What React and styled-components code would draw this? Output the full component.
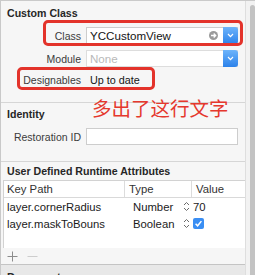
import React from 'react';
import styled, { createGlobalStyle } from 'styled-components';

const GlobalStyle = createGlobalStyle`
  html, body {
    margin: 0;
    padding: 0;
    background: #f6f6f6;
  }
  body {
    width: 255px;
    height: 275px;
    overflow: hidden;
    font-family: "Liberation Sans", Arial, sans-serif;
  }
`;

const Window = styled.div`
  position: relative;
  display: flex;
  width: 255px;
  height: 275px;
  box-sizing: border-box;
  border-top: 1px solid #cacaca;
  background: #f6f6f6;
  overflow: hidden;
`;

const Panel = styled.div`
  display: flex;
  flex-direction: column;
  width: 245px;
  box-sizing: border-box;
  border-left: 1px solid #c9c9c9;
`;

const Section = styled.div`
  padding-top: ${(p) => p.$top}px;
  padding-bottom: ${(p) => p.$bottom || 0}px;
  border-bottom: ${(p) => (p.$last ? 'none' : '1px solid #d6d6d6')};
`;

const SectionTitle = styled.div`
  padding-left: 6px;
  font-size: 10.6px;
  font-weight: bold;
  line-height: 14px;
  color: #262626;
`;

const FieldRow = styled.div`
  position: relative;
  display: grid;
  grid-template-columns: 80px 152px;
  column-gap: 5px;
  align-items: center;
  height: 17px;
  margin-top: ${(p) => p.$top}px;
`;

const Label = styled.span`
  text-align: right;
  font-size: 10.5px;
  color: #3b3b3b;
  white-space: nowrap;
`;

const Value = styled.span`
  padding-left: 4px;
  font-size: 10.8px;
  color: #151515;
`;

const Field = styled.div`
  display: flex;
  align-items: center;
  height: 17px;
  box-sizing: border-box;
  padding-left: 3px;
  border: 1px solid ${(p) => (p.$muted ? '#dddddd' : '#cdcdcd')};
  background: #ffffff;
  font-size: 11.6px;
  color: ${(p) => (p.$muted ? '#b9b9b9' : '#141414')};
`;

const FieldText = styled.span`
  flex: 1;
  white-space: nowrap;
`;

const GoIcon = styled.svg`
  margin-right: 5px;
`;

const PopupButton = styled.div`
  display: flex;
  align-items: center;
  justify-content: center;
  width: 15px;
  height: 17px;
  margin: -1px -1px -1px 0;
  border-radius: 0 3px 3px 0;
  background: linear-gradient(#6db4fb, #2c82ea);
`;

const Highlight = styled.div`
  position: absolute;
  left: ${(p) => p.$left}px;
  top: ${(p) => p.$top}px;
  width: ${(p) => p.$width}px;
  height: ${(p) => p.$height}px;
  box-sizing: border-box;
  border: 3px solid #e3332b;
  border-radius: 5px;
  pointer-events: none;
`;

const Annotation = styled.div`
  position: absolute;
  left: 92px;
  top: 97px;
  font-family: "Noto Sans CJK SC", sans-serif;
  font-size: 19.5px;
  line-height: 1;
  color: #e5382d;
  white-space: nowrap;
`;

const Table = styled.div`
  margin: 2px 0 0 2px;
  border-top: 1px solid #d2d2d2;
  border-left: 1px solid #d2d2d2;
  background: #ffffff;
`;

const Columns = styled.div`
  display: grid;
  grid-template-columns: 120px 67px 1fr;
  align-items: center;
`;

const HeaderRow = styled(Columns)`
  height: 16px;
  border-bottom: 1px solid #d9d9d9;
`;

const HeaderCell = styled.div`
  height: 100%;
  box-sizing: border-box;
  padding-left: ${(p) => p.$pad}px;
  border-left: ${(p) => (p.$divided ? '1px solid #dcdcdc' : 'none')};
  font-size: 11.3px;
  line-height: 16px;
  color: #333333;
`;

const BodyRow = styled(Columns)`
  height: 17px;
  font-size: 11.3px;
  color: #1b1b1b;
`;

const Cell = styled.div`
  display: flex;
  align-items: center;
  justify-content: ${(p) => (p.$spread ? 'space-between' : 'flex-start')};
  padding-left: ${(p) => p.$pad}px;
  padding-right: ${(p) => (p.$spread ? 1 : 0)}px;
  white-space: nowrap;
`;

const TableFill = styled.div`
  height: 16px;
`;

const Toolbar = styled.div`
  display: flex;
  align-items: center;
  gap: 9px;
  height: 16px;
  padding-left: 6px;
`;

const DocumentHeader = styled.div`
  flex: 1;
  padding: 5px 0 0 6px;
  border-top: 1px solid #c4c4c4;
  background: #e8e8e8;
  font-size: 11px;
  font-weight: bold;
  line-height: 14px;
  color: #262626;
`;

const ScrollTrack = styled.div`
  display: flex;
  justify-content: flex-end;
  width: 10px;
  box-sizing: border-box;
  padding-top: 4px;
  border-left: 1px solid #dedede;
  background: #f2f2f2;
`;

const ScrollThumb = styled.div`
  width: 5px;
  border-radius: 3px 3px 0 0;
  background: #c3c3c3;
`;

const Chevron = () => (
  <svg width="7" height="5" viewBox="0 0 7 5">
    <path d="M1 1 L3.5 3.6 L6 1" fill="none" stroke="#fff" strokeWidth="1.2" />
  </svg>
);

const Stepper = () => (
  <svg width="7" height="11" viewBox="0 0 7 11">
    <path d="M1 4 L3.5 1.5 L6 4 M1 7 L3.5 9.5 L6 7" fill="none" stroke="#6a6a6a" strokeWidth="1" />
  </svg>
);

const Checkbox = () => (
  <svg width="11" height="11" viewBox="0 0 11 11">
    <rect x="0" y="0" width="11" height="11" rx="2" fill="#3a8ef3" />
    <path d="M2.6 5.8 L4.6 7.8 L8.4 3.1" fill="none" stroke="#fff" strokeWidth="1.5" />
  </svg>
);

const App = () => (
  <>
    <GlobalStyle />
    <Window>
      <Panel>
        <Section $top={5} $bottom={14}>
          <SectionTitle>Custom Class</SectionTitle>
          <FieldRow $top={7}>
            <Label>Class</Label>
            <Field>
              <FieldText>YCCustomView</FieldText>
              <GoIcon width="9" height="9" viewBox="0 0 9 9">
                <circle cx="4.5" cy="4.5" r="4.5" fill="#9b9b9b" />
                <path d="M2 4.5 H6.6 M4.7 2.5 L6.7 4.5 L4.7 6.5" fill="none" stroke="#fff" strokeWidth="1.3" />
              </GoIcon>
              <PopupButton><Chevron /></PopupButton>
            </Field>
            <Highlight $left={42} $top={-7} $width={200} $height={26} />
          </FieldRow>
          <FieldRow $top={6}>
            <Label>Module</Label>
            <Field $muted>
              <FieldText>None</FieldText>
              <PopupButton><Chevron /></PopupButton>
            </Field>
          </FieldRow>
          <FieldRow $top={4}>
            <Label>Designables</Label>
            <Value>Up to date</Value>
            <Highlight $left={16} $top={-4} $width={138} $height={23} />
          </FieldRow>
        </Section>

        <Section $top={4} $bottom={16}>
          <SectionTitle>Identity</SectionTitle>
          <FieldRow $top={7}>
            <Label>Restoration ID</Label>
            <Field />
          </FieldRow>
        </Section>

        <Section $top={2} $last>
          <SectionTitle>User Defined Runtime Attributes</SectionTitle>
          <Table>
            <HeaderRow>
              <HeaderCell $pad={3}>Key Path</HeaderCell>
              <HeaderCell $pad={4} $divided>Type</HeaderCell>
              <HeaderCell $pad={4} $divided>Value</HeaderCell>
            </HeaderRow>
            <BodyRow>
              <Cell $pad={3}>layer.cornerRadius</Cell>
              <Cell $pad={9} $spread>Number <Stepper /></Cell>
              <Cell $pad={2}>70</Cell>
            </BodyRow>
            <BodyRow>
              <Cell $pad={3}>layer.maskToBouns</Cell>
              <Cell $pad={9} $spread>Boolean <Stepper /></Cell>
              <Cell $pad={2}><Checkbox /></Cell>
            </BodyRow>
            <TableFill />
          </Table>
          <Toolbar>
            <svg width="11" height="11" viewBox="0 0 11 11">
              <path d="M5.5 0.5 V10.5 M0.5 5.5 H10.5" stroke="#8c8c8c" strokeWidth="1" />
            </svg>
            <svg width="11" height="11" viewBox="0 0 11 11">
              <path d="M0.5 5.5 H10.5" stroke="#cdcdcd" strokeWidth="1" />
            </svg>
          </Toolbar>
        </Section>

        <DocumentHeader>Document</DocumentHeader>
      </Panel>
      <ScrollTrack>
        <ScrollThumb />
      </ScrollTrack>
      <Annotation>多出了这行文字</Annotation>
    </Window>
  </>
);

export default App;
